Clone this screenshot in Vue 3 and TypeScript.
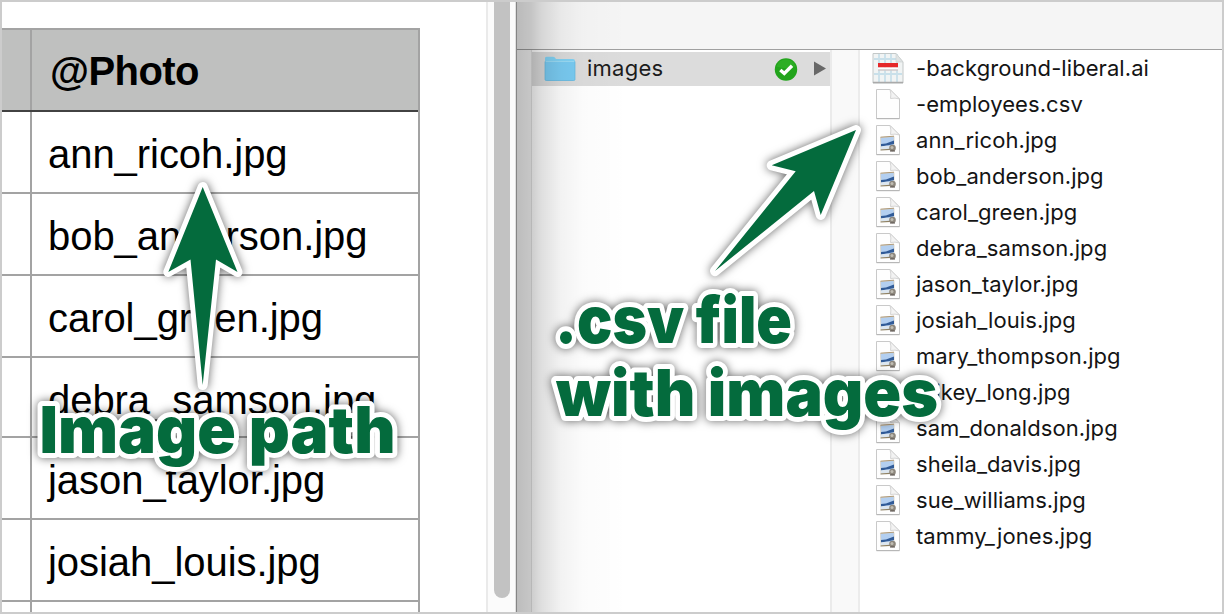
<script setup lang="ts">
const photos: string[] = [
  'ann_ricoh.jpg',
  'bob_anderson.jpg',
  'carol_green.jpg',
  'debra_samson.jpg',
  'jason_taylor.jpg',
  'josiah_louis.jpg',
  '',
]

interface FileEntry {
  name: string
  kind: 'ai' | 'doc' | 'jpg'
}

const files: FileEntry[] = [
  { name: '-background-liberal.ai', kind: 'ai' },
  { name: '-employees.csv', kind: 'doc' },
  ...[
    'ann_ricoh',
    'bob_anderson',
    'carol_green',
    'debra_samson',
    'jason_taylor',
    'josiah_louis',
    'mary_thompson',
    'mikey_long',
    'sam_donaldson',
    'sheila_davis',
    'sue_williams',
    'tammy_jones',
  ].map((n): FileEntry => ({ name: `${n}.jpg`, kind: 'jpg' })),
]
</script>

<template>
  <main class="screen">
    <section class="sheet">
      <div class="table">
        <div class="tr head"><div class="stub"></div><div class="cell">@Photo</div></div>
        <div v-for="(p, i) in photos" :key="i" class="tr" :class="{ short: i === 3 }">
          <div class="stub"></div>
          <div class="cell">{{ p }}</div>
        </div>
      </div>
    </section>
    <div class="track"><div class="thumb"></div></div>
    <section class="finder">
      <div class="toolbar"></div>
      <div class="columns">
        <div class="gutter"></div>
        <div class="folders">
          <div class="folder">
            <svg class="folder-icon" width="32" height="26" viewBox="0 0 32 26">
              <path d="M1 2Q1 .8 3 .8H9Q11 .8 11.600 2.500L12 3H29Q31 3 31 5V23.500Q31 24.500 29.500 24.500H2.500Q1 24.500 1 23.500Z" fill="#82d3f5" />
              <path d="M1 5.500H31V23.500Q31 24.500 29.500 24.500H2.500Q1 24.500 1 23.500Z" fill="#7accf3" stroke="#62b8e0" stroke-width=".7" />
              <path d="M1.500 5.500H30.500" stroke="#9bdcf6" />
            </svg>
            <span class="folder-name">images</span>
            <svg class="check" width="24" height="24" viewBox="0 0 24 24">
              <circle cx="12" cy="12.500" r="11.200" fill="#22a41c" />
              <path d="M2.500 9.500A10 10 0 0 1 21.500 9.500Q12 13 2.500 9.500Z" fill="#35b52c" opacity=".6" />
              <path d="M6.300 12.900L10.300 16.500L18 8.800" fill="none" stroke="#fff" stroke-width="3.400" />
            </svg>
            <svg class="chevron" width="12" height="15" viewBox="0 0 12 15"><path d="M0 .5L12 7.500L0 14.500Z" fill="#686868" /></svg>
          </div>
        </div>
        <div class="divider"></div>
        <ul class="files">
          <li v-for="f in files" :key="f.name">
            <svg v-if="f.kind === 'ai'" class="icon" width="32" height="32" viewBox="0 0 32 32">
              <path d="M1 1.500H24L31 10V31H1Z" fill="#f1f4f4" stroke="#c3c8c8" />
              <path d="M7 2V30M13 2V30M19 2V30M25 2V30M2 7H25M2 22H30" stroke="#c9e0ea" stroke-width="1.800" />
              <path d="M24 1.500V10H31Z" fill="#dfe3e3" stroke="#cdd1d1" stroke-width=".7" />
              <path d="M6 11H26V15.500H6Z" fill="#e5282a" />
              <path d="M6 15.500H26V18.500H6Z" fill="#fff" />
              <path d="M6 18H26" stroke="#b7adb0" />
              <path d="M1 30.500H31" stroke="#aaa" stroke-width="1.500" />
            </svg>
            <svg v-else class="icon" width="32" height="32" viewBox="0 0 32 32">
              <path d="M4.500 1.500H18L27.500 11V30.500H4.500Z" fill="#fefefe" stroke="#c9c9c9" />
              <path d="M18 1.500Q19.500 6 18.500 10.500Q23 9.500 27.500 11Z" fill="#f3f3f3" stroke="#cbcbcb" stroke-width=".8" />
              <path d="M4.500 30.700H27.500" stroke="#b3b3b3" />
              <g v-if="f.kind === 'jpg'">
                <path d="M8.500 13.500L22 12.500V24.500L9 25.500Z" fill="#b3cff0" stroke="#d6cdbd" stroke-width=".7" />
                <path d="M8.500 13.200L22 12.200" stroke="#b09a78" stroke-width="1" />
                <path d="M9 20L14 19.500L22 16.500V20L15 21.500L9 22.500Z" fill="#315b97" />
                <path d="M9 22.500Q14 20.800 22 22.500L21 25L9 25.500Z" fill="#dce6ef" />
                <path d="M8.500 26L18 25.400" stroke="#8f8061" stroke-width="1.100" />
                <circle cx="20.500" cy="24" r="3.300" fill="#8c867c" />
                <circle cx="20" cy="23.500" r="1.500" fill="#c1bdb3" />
                <path d="M18 27H23" stroke="#554d48" />
              </g>
            </svg>
            <span>{{ f.name }}</span>
          </li>
        </ul>
      </div>
      <div class="shade"></div>
    </section>

    <svg class="callouts" width="1224" height="614" viewBox="0 0 1224 614">
      <g class="arrow">
        <path d="M202.700 187L237.500 272L216 259.500L202.700 385L190.500 259.500L168.300 272Z" />
        <path d="M856 130L771.700 165.300L795.700 171.300L715 271L814 191L820.700 215Z" />
      </g>
      <g class="label">
        <text x="39.500" y="453" textLength="356" lengthAdjust="spacingAndGlyphs">Image path</text>
        <text x="555" y="342.500" textLength="237" lengthAdjust="spacingAndGlyphs">.csv file</text>
        <text x="556" y="415.500" textLength="382" lengthAdjust="spacingAndGlyphs">with images</text>
      </g>
    </svg>
    <div class="frame"></div>
  </main>
</template>

<style>
body { margin: 0; }
</style>

<style scoped>
* { box-sizing: border-box; }
.screen { position: relative; display: flex; width: 1224px; height: 614px; overflow: hidden; background: #fff; }
.sheet { width: 486px; flex: none; padding-top: 28px; }
.table { width: 420px; border-top: 2px solid #a3a3a3; border-right: 2px solid #a3a3a3; }
.tr { display: flex; height: 82px; border-bottom: 2px solid #a3a3a3; font: 40px/80px "Liberation Sans", sans-serif; color: #000; }
.tr.short { height: 80px; }
.stub { width: 32px; flex: none; border-right: 2px solid #a3a3a3; }
.cell { flex: 1; padding: 2px 0 0 16px; white-space: nowrap; letter-spacing: -.05px; }
.head { background: #bfc0bf; border-bottom-color: #424242; font-weight: 700; }
.head .cell { padding-left: 18px; padding-top: 1px; letter-spacing: -.55px; }
.track { width: 30px; flex: none; padding: 0 5px 0 6px; background: #fbfbfb; border-left: 2px solid #eaeaea; border-right: 1px solid #e0e0e0; }
.thumb { width: 16px; height: 598px; background: #c2c2c2; border-radius: 0 0 8px 8px; }
.finder { position: relative; flex: 1; display: flex; flex-direction: column; border-left: 1px solid #858585; }
.toolbar { height: 50px; flex: none; background: #f5f5f5; border-bottom: 1px solid #a0a0a0; }
.columns { flex: 1; display: flex; }
.gutter { width: 15px; background: #f8f8f8; border-right: 1px solid #e4e4e4; }
.folders { width: 298px; padding-top: 2px; }
.folder { display: flex; align-items: center; height: 34px; padding-left: 12px; background: #dcdcdc; }
.folder-name { width: 187px; margin-left: 11px; font: 430 22px/34px Inter, sans-serif; letter-spacing: .25px; color: #1c1c1c; padding-bottom: 2px; }
.check { flex: none; }
.chevron { flex: none; margin-left: 16px; position: relative; top: -1px; }
.folder-icon { flex: none; }
.divider { width: 30px; background: #f9f9f9; border-left: 2px solid #ebebeb; border-right: 2px solid #ececec; }
.files { margin: 0; padding: 0 0 0 12px; list-style: none; }
.files li { display: flex; align-items: center; height: 36px; font: 430 22px/36px Inter, sans-serif; letter-spacing: .07px; color: #141414; white-space: nowrap; }
.icon { flex: none; margin-right: 12px; }
.shade { position: absolute; inset: 0 auto 0 0; width: 110px; background: linear-gradient(90deg, rgba(0,0,0,.24), rgba(0,0,0,.2) 14px, rgba(0,0,0,.13) 24px, rgba(0,0,0,.05) 44px, rgba(0,0,0,.015) 66px, transparent); }
.callouts { position: absolute; inset: 0; }
.arrow path, .label text { fill: #046b3d; stroke: #fff; stroke-width: 10px; stroke-linejoin: round; paint-order: stroke; }
.label text { font: 900 65px Inter, sans-serif; }
.arrow, .label { filter: drop-shadow(0 0 5px rgba(0,0,0,.6)); }
.frame { position: absolute; inset: 0; border: 2px solid #ccc; }
</style>
